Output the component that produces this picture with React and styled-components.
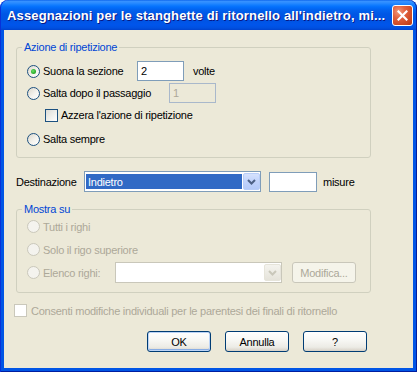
import React from 'react';
import styled, { createGlobalStyle } from 'styled-components';

const Global = createGlobalStyle`
  html, body { margin: 0; padding: 0; background: #ffffff; }
  body { font-family: "Liberation Sans", Arial, sans-serif; font-size: 11px; letter-spacing: -0.25px; }
  * { box-sizing: border-box; }
`;

const Window = styled.div`
  width: 417px;
  height: 372px;
  display: flex;
  flex-direction: column;
  border-radius: 8px 8px 0 0;
  overflow: hidden;
  background: linear-gradient(to bottom,
    #0058E6 0px, #3A93FF 1px, #2A8BFF 3px, #127DFF 5px, #036FFC 7px,
    #0262EE 10px, #0057E5 14px, #0054E3 20px, #0055EB 25px, #0050E0 28px,
    #0043CF 30px, #0055E5 30px, #0055E5 100%);
  box-shadow: inset 1px 0 0 #0831D9, inset -1px 0 0 #001EA0, inset 0 -1px 0 #001EA0;
`;

const TitleBar = styled.div`
  height: 30px;
  flex: none;
  display: flex;
  align-items: center;
  justify-content: space-between;
  padding: 0 4px 0 7px;
`;

const TitleText = styled.span`
  color: #ffffff;
  font-family: "Liberation Sans", Arial, sans-serif;
  font-weight: bold;
  font-size: 13px;
  letter-spacing: 0.15px;
  text-shadow: 1px 1px 0 #0A1883;
  white-space: nowrap;
`;

const CloseButton = styled.div`
  width: 21px;
  height: 21px;
  border: 1px solid #ffffff;
  border-radius: 3px;
  background: radial-gradient(circle at 30% 30%, #F29A7C 0%, #E2623F 35%, #C8441F 80%, #B23814 100%);
  display: flex;
  align-items: center;
  justify-content: center;
  margin-top: 1px;
`;

const Client = styled.div`
  flex: 1;
  margin: 0 4px 4px;
  background: #ECE9D8;
  padding: 0 42px 0 12px;
  display: flex;
  flex-direction: column;
`;

const Group = styled.fieldset`
  margin: ${p => p.$mt}px 0 0;
  padding: ${p => p.$pt}px 10px ${p => p.$pb}px 10px;
  border: 1px solid #D0D0BF;
  border-radius: 3px;
  min-width: 0;
  display: flex;
  flex-direction: column;
`;

const Legend = styled.legend`
  padding: 0 2px;
  margin-left: -5px;
  color: #0046D5;
  font-size: 11px;
  line-height: 12px;
`;

const Row = styled.div`
  display: flex;
  align-items: center;
  height: ${p => p.$h || 22}px;
  margin-top: ${p => p.$mt || 0}px;
  padding-left: ${p => p.$indent || 0}px;
  margin-left: ${p => p.$ml || 0}px;
  flex: none;
`;

const RadioCircle = styled.span`
  width: 13px;
  height: 13px;
  flex: none;
  border-radius: 50%;
  border: 1px solid ${p => (p.$disabled ? '#CAC8BB' : '#1C5180')};
  background: ${p => (p.$disabled ? '#F4F3EE' : 'linear-gradient(135deg, #DCD7CB 0%, #F4F3EE 55%, #FFFFFF 100%)')};
  display: flex;
  align-items: center;
  justify-content: center;
`;

const RadioDot = styled.span`
  width: 5px;
  height: 5px;
  border-radius: 50%;
  background: radial-gradient(circle at 40% 40%, #6BE06B 0%, #2FB22F 55%, #1E8E1E 100%);
`;

const CheckBox = styled.span`
  width: 13px;
  height: 13px;
  flex: none;
  border: 1px solid ${p => (p.$disabled ? '#CAC8BB' : '#1C5180')};
  background: ${p => (p.$disabled ? '#FFFFFF' : 'linear-gradient(135deg, #DCDCD7 0%, #F2F2EE 60%, #FFFFFF 100%)')};
`;

const Label = styled.span`
  margin-left: ${p => p.$gap ?? 3}px;
  color: ${p => (p.$disabled ? '#ACA899' : '#000000')};
  white-space: nowrap;
  width: ${p => (p.$w ? `${p.$w}px` : 'auto')};
  flex: none;
`;

const Text = styled.span`
  margin-left: ${p => p.$ml || 0}px;
  color: #000000;
  white-space: nowrap;
  width: ${p => (p.$w ? `${p.$w}px` : 'auto')};
  flex: none;
`;

const TextBox = styled.div`
  width: ${p => p.$w}px;
  height: 20px;
  flex: none;
  margin-left: ${p => p.$ml || 0}px;
  border: 1px solid ${p => (p.$disabled ? '#A9B8CB' : '#7F9DB9')};
  background: ${p => (p.$disabled ? '#ECE9D8' : '#FFFFFF')};
  color: ${p => (p.$disabled ? '#ACA899' : '#000000')};
  padding-left: 3px;
  display: flex;
  align-items: center;
`;

const Select = styled.div`
  width: ${p => p.$w}px;
  height: 21px;
  flex: none;
  border: 1px solid ${p => (p.$disabled ? '#C9C7BA' : '#7F9DB9')};
  background: #FFFFFF;
  padding: 1px 0 1px 1px;
  display: flex;
  align-items: stretch;
  gap: 1px;
`;

const SelectValue = styled.div`
  flex: 1;
  margin: 1px 0;
  padding-left: 2px;
  display: flex;
  align-items: center;
  background: ${p => (p.$selected ? '#316AC5' : 'transparent')};
  color: #FFFFFF;
`;

const DropButton = styled.div`
  width: 17px;
  flex: none;
  border: 1px solid ${p => (p.$disabled ? '#E6E4DA' : '#B9CEF8')};
  border-radius: 2px;
  background: ${p => (p.$disabled ? 'linear-gradient(#F4F3EE, #E5E3DA)' : 'linear-gradient(#D6E2FD, #C1D3FB 50%, #B4CAF9)')};
  display: flex;
  align-items: center;
  justify-content: center;
`;

const Button = styled.div`
  width: 64px;
  height: 21px;
  flex: none;
  margin-left: ${p => p.$ml || 0}px;
  border: 1px solid ${p => (p.$disabled ? '#C9C7BA' : '#003C74')};
  border-radius: 3px;
  background: ${p => (p.$disabled ? '#F5F4EA' : 'linear-gradient(#FFFFFF 0%, #F8F8F5 40%, #ECEBE5 80%, #D6D0C5 100%)')};
  color: ${p => (p.$disabled ? '#ACA899' : '#000000')};
  box-shadow: ${p => (p.$default ? 'inset 0 0 0 1px #BCD4F6, inset 0 -1px 0 1px #89ADE4' : 'none')};
  display: flex;
  align-items: center;
  justify-content: center;
`;

const ButtonRow = styled.div`
  display: flex;
  justify-content: flex-end;
  align-items: center;
  margin-top: ${p => p.$mt}px;
  padding-right: 4px;
  gap: 14px;
`;

const Chevron = ({ color }) => (
  <svg width="9" height="6" viewBox="0 0 9 6">
    <path d="M1 1 L4.5 4.5 L8 1" fill="none" stroke={color} strokeWidth="2" />
  </svg>
);

const Radio = ({ checked, disabled, label, w }) => (
  <>
    <RadioCircle $disabled={disabled}>{checked && <RadioDot />}</RadioCircle>
    <Label $disabled={disabled} $w={w}>{label}</Label>
  </>
);

export default function App() {
  return (
    <>
      <Global />
      <Window>
        <TitleBar>
          <TitleText>Assegnazioni per le stanghette di ritornello all'indietro, mi...</TitleText>
          <CloseButton>
            <svg width="11" height="11" viewBox="0 0 11 11">
              <path d="M1.5 1.5 L9.5 9.5 M9.5 1.5 L1.5 9.5" stroke="#FFFFFF" strokeWidth="2.2" strokeLinecap="square" />
            </svg>
          </CloseButton>
        </TitleBar>
        <Client>
          <Group $mt={11} $pt={7} $pb={7}>
            <Legend>Azione di ripetizione</Legend>
            <Row>
              <Radio checked label="Suona la sezione" w={94} />
              <TextBox $w={47}>2</TextBox>
              <Text $ml={9}>volte</Text>
            </Row>
            <Row>
              <Radio label="Salta dopo il passaggio" w={126} />
              <TextBox $w={47} $disabled>1</TextBox>
            </Row>
            <Row $indent={18}>
              <CheckBox />
              <Label>Azzera l'azione di ripetizione</Label>
            </Row>
            <Row $mt={2}>
              <Radio label="Salta sempre" />
            </Row>
          </Group>

          <Row $mt={13} $h={21}>
            <Text $w={68}>Destinazione</Text>
            <Select $w={177}>
              <SelectValue $selected>Indietro</SelectValue>
              <DropButton>
                <Chevron color="#4D6185" />
              </DropButton>
            </Select>
            <TextBox $w={48} $ml={8}></TextBox>
            <Text $ml={6}>misure</Text>
          </Row>

          <Group $mt={11} $pt={0} $pb={8}>
            <Legend>Mostra su</Legend>
            <Row $h={23}>
              <Radio disabled label="Tutti i righi" />
            </Row>
            <Row $h={23}>
              <Radio disabled label="Solo il rigo superiore" />
            </Row>
            <Row $h={23}>
              <Radio disabled label="Elenco righi:" w={72} />
              <Select $w={167} $disabled>
                <SelectValue />
                <DropButton $disabled>
                  <Chevron color="#C9C7BA" />
                </DropButton>
              </Select>
              <Button $disabled $ml={10}>Modifica...</Button>
            </Row>
          </Group>

          <Row $mt={7} $h={21} $ml={-2}>
            <CheckBox $disabled />
            <Label $disabled $gap={4}>Consenti modifiche individuali per le parentesi dei finali di ritornello</Label>
          </Row>

          <ButtonRow $mt={10}>
            <Button $default>OK</Button>
            <Button>Annulla</Button>
            <Button>?</Button>
          </ButtonRow>
        </Client>
      </Window>
    </>
  );
}
